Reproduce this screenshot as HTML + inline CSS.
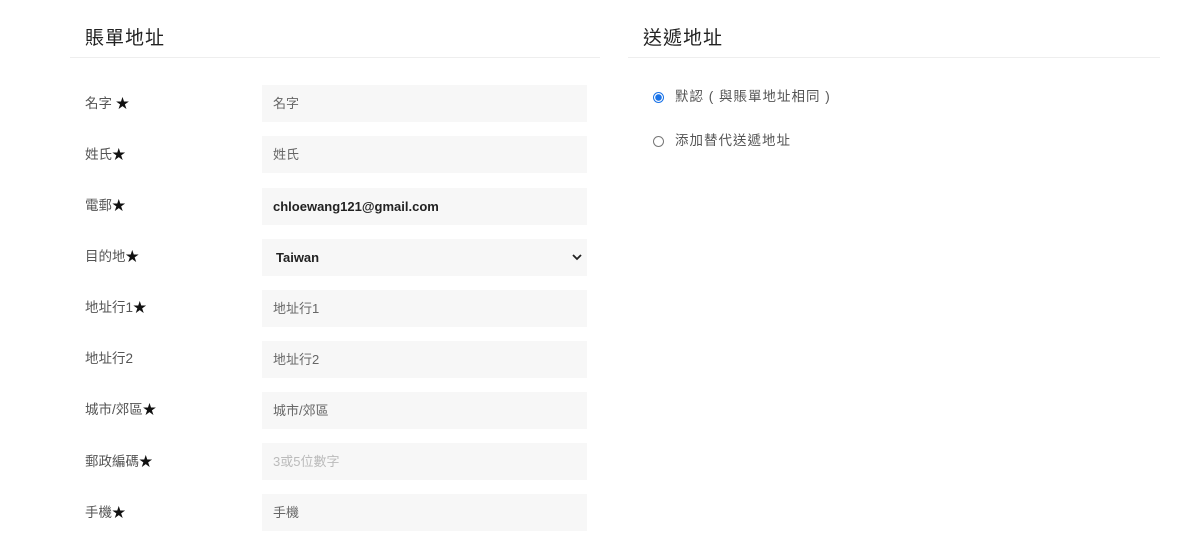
<!DOCTYPE html>
<html><head><meta charset="utf-8"><style>
body{margin:0;width:1200px;height:542px;background:#fff;font-family:"Liberation Sans","Noto Sans CJK TC",sans-serif;position:relative;overflow:hidden}
.t{position:absolute;font-size:19px;color:#222;top:23px;letter-spacing:1px}
.hr{position:absolute;top:57px;height:1px;background:#eee}
.l{position:absolute;left:85px;font-size:13.5px;color:#555}
.l b{color:#111;font-weight:normal}
.i{position:absolute;left:262px;width:325px;height:37px;background:#f7f7f7;font-size:13px;color:#666;line-height:37px;box-sizing:border-box;padding-left:11px}
.v{color:#222;font-weight:bold}
.r{position:absolute;left:653px;font-size:13.5px;color:#555;letter-spacing:1px}
.c{display:inline-block;width:11px;height:11px;border:1px solid #777;border-radius:50%;vertical-align:-2px;margin-right:11px;box-sizing:border-box}
</style></head><body>
<div class="t" style="left:85px">賬單地址</div>
<div class="hr" style="left:70px;width:530px"></div>
<div class="t" style="left:643px">送遞地址</div>
<div class="hr" style="left:628px;width:532px"></div>
<div class="r" style="top:85px"><span class="c" style="border:1px solid #1a73e8;background:radial-gradient(circle,#1a73e8 3px,#fff 3.5px)"></span>默認 ( 與賬單地址相同 )</div>
<div class="r" style="top:129px"><span class="c"></span>添加替代送遞地址</div>

<div class="l" style="top:92px">名字 <b>★</b></div><div class="i" style="top:85px">名字</div>
<div class="l" style="top:143px">姓氏<b>★</b></div><div class="i" style="top:136px">姓氏</div>
<div class="l" style="top:194px">電郵<b>★</b></div><div class="i v" style="top:188px">chloewang121@gmail.com</div>
<div class="l" style="top:245px">目的地<b>★</b></div><div class="i v" style="top:239px;padding-left:14px">Taiwan<svg style="position:absolute;right:5px;top:14px" width="10" height="8" viewBox="0 0 10 8"><path d="M1 2l4 4 4-4" stroke="#222" stroke-width="1.8" fill="none"/></svg></div>
<div class="l" style="top:296px">地址行1<b>★</b></div><div class="i" style="top:290px">地址行1</div>
<div class="l" style="top:347px">地址行2</div><div class="i" style="top:341px">地址行2</div>
<div class="l" style="top:398px">城市/郊區<b>★</b></div><div class="i" style="top:392px">城市/郊區</div>
<div class="l" style="top:450px">郵政編碼<b>★</b></div><div class="i" style="top:443px;color:#bbb">3或5位數字</div>
<div class="l" style="top:501px">手機<b>★</b></div><div class="i" style="top:494px">手機</div>
</body></html>
